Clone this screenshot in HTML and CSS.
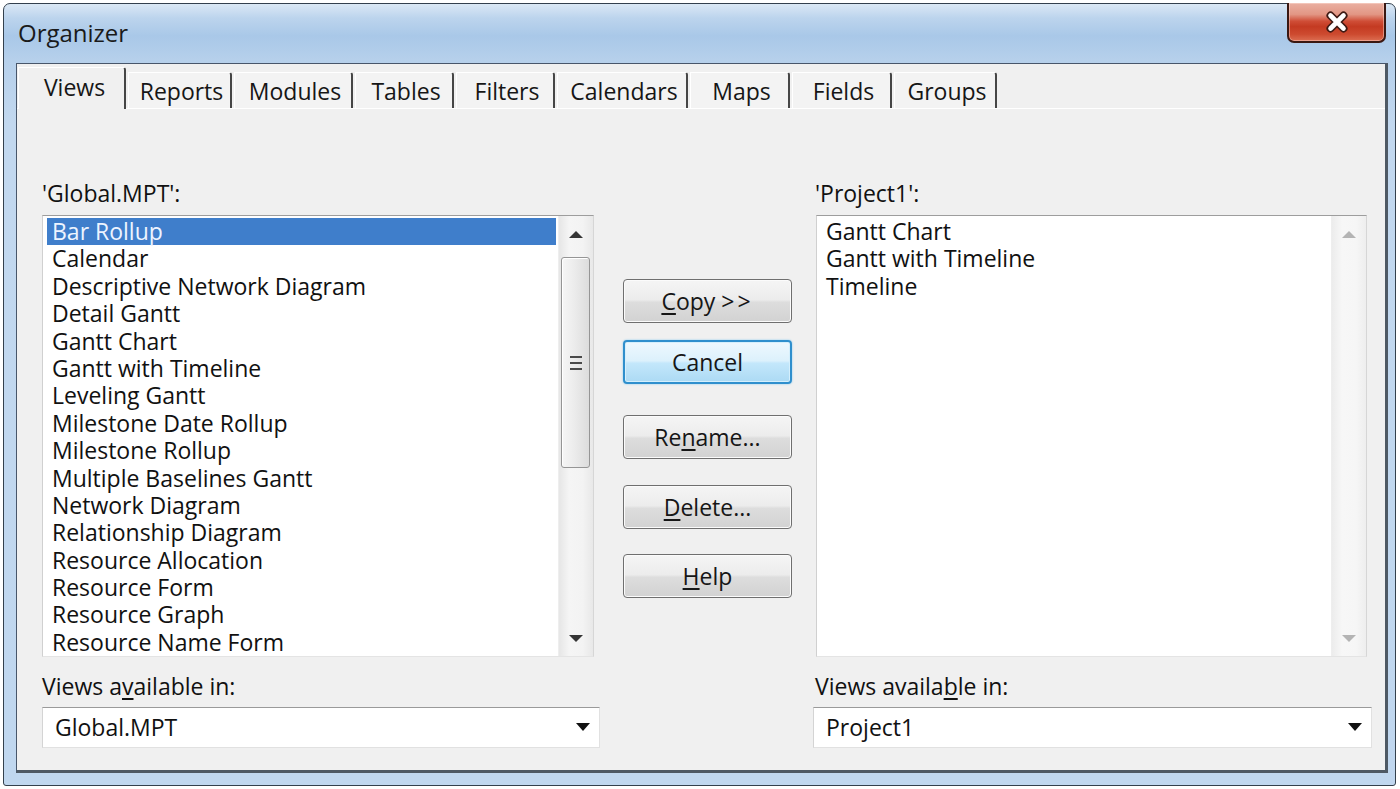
FILE: index.html
```html
<!DOCTYPE html>
<html lang="en">
<head>
<meta charset="utf-8">
<title>Organizer</title>
<link rel="stylesheet" href="styles.css">
</head>
<body>
<div class="window">
  <div class="titlebar">
    <div class="title">Organizer</div>
    <div class="close">
      <svg width="26" height="22" viewBox="0 0 26 22" aria-hidden="true">
        <path d="M6.5 4.5 L19.5 17.5 M19.5 4.5 L6.5 17.5" stroke="#3e1a14" stroke-width="8" stroke-linecap="round" fill="none"/>
        <path d="M6.5 4.5 L19.5 17.5 M19.5 4.5 L6.5 17.5" stroke="#ffffff" stroke-width="4.6" stroke-linecap="round" fill="none"/>
      </svg>
    </div>
  </div>
  <div class="client">
    <div class="tabs">
      <div class="tab sel t-views">Views</div>
      <div class="tab t-reports">Reports</div>
      <div class="tab t-modules">Modules</div>
      <div class="tab t-tables">Tables</div>
      <div class="tab t-filters">Filters</div>
      <div class="tab t-calendars">Calendars</div>
      <div class="tab t-maps">Maps</div>
      <div class="tab t-fields">Fields</div>
      <div class="tab t-groups">Groups</div>
    </div>
    <div class="page">
      <div class="col left">
        <div class="label top">'Global.MPT':</div>
        <div class="listbox">
          <div class="items">
            <div class="item selected">Bar Rollup</div>
            <div class="item">Calendar</div>
            <div class="item">Descriptive Network Diagram</div>
            <div class="item">Detail Gantt</div>
            <div class="item">Gantt Chart</div>
            <div class="item">Gantt with Timeline</div>
            <div class="item">Leveling Gantt</div>
            <div class="item">Milestone Date Rollup</div>
            <div class="item">Milestone Rollup</div>
            <div class="item">Multiple Baselines Gantt</div>
            <div class="item">Network Diagram</div>
            <div class="item">Relationship Diagram</div>
            <div class="item">Resource Allocation</div>
            <div class="item">Resource Form</div>
            <div class="item">Resource Graph</div>
            <div class="item">Resource Name Form</div>
          </div>
          <div class="vscroll">
            <div class="sarrow"><span class="tri-up"></span></div>
            <div class="track"><div class="thumb"><span class="grip"></span></div></div>
            <div class="sarrow"><span class="tri-down"></span></div>
          </div>
        </div>
        <div class="label lower">Views a<u>v</u>ailable in:</div>
        <div class="combo"><span>Global.MPT</span><span class="caret"></span></div>
      </div>
      <div class="buttons">
        <div class="btn b-copy"><span><u>C</u>opy <span class="gt">&gt;&gt;</span></span></div>
        <div class="btn default b-cancel">Cancel</div>
        <div class="btn b-rename"><span>Re<u>n</u>ame...</span></div>
        <div class="btn b-delete"><span><u>D</u>elete...</span></div>
        <div class="btn b-help"><span><u>H</u>elp</span></div>
      </div>
      <div class="col right">
        <div class="label top">'Project1':</div>
        <div class="listbox">
          <div class="items">
            <div class="item">Gantt Chart</div>
            <div class="item">Gantt with Timeline</div>
            <div class="item">Timeline</div>
          </div>
          <div class="vscroll disabled">
            <div class="sarrow"><span class="tri-up"></span></div>
            <div class="track"></div>
            <div class="sarrow"><span class="tri-down"></span></div>
          </div>
        </div>
        <div class="label lower">Views availa<u>b</u>le in:</div>
        <div class="combo"><span>Project1</span><span class="caret"></span></div>
      </div>
    </div>
  </div>
</div>
</body>
</html>
```
FILE: styles.css
```css
html, body {
  margin: 0;
  padding: 0;
  background: #ffffff;
}
body {
  font-family: "Open Sans", "Noto Sans", sans-serif;
  font-size: 23px;
  font-weight: 500;
  color: #111111;
}
u {
  text-decoration-thickness: 2px;
  text-underline-offset: 3px;
}

/* window frame */
.window {
  box-sizing: border-box;
  width: 1393px;
  height: 783px;
  margin: 3px 0 0 3px;
  border: 1px solid #33404d;
  border-radius: 7px 7px 3px 3px;
  background: linear-gradient(180deg, #dbe8f5 0px, #bcd4ed 14px, #a9c8e8 32px, #b6d0eb 56px, #c2d8ef 120px, #c0d7ef 100%);
  padding: 0 7px 12px 12px;
  display: flex;
  flex-direction: column;
}
.titlebar {
  height: 59px;
  flex: none;
  display: flex;
  justify-content: space-between;
  align-items: flex-start;
  padding-left: 2px;
}
.title {
  font-size: 24px;
  font-weight: 400;
  line-height: 28px;
  margin-top: 15px;
  color: #1a1a1a;
}
.close {
  box-sizing: border-box;
  width: 99px;
  height: 40px;
  margin-top: -1px;
  margin-right: 2px;
  border: 2px solid #3a1812;
  border-top: none;
  border-radius: 0 0 7px 7px;
  background: linear-gradient(180deg, #eab0a2 0%, #e29684 30%, #cf4d36 48%, #c43a22 62%, #cd4a2f 82%, #dc6e52 100%);
  box-shadow: inset 0 0 0 1px rgba(255, 225, 215, 0.45);
  display: flex;
  align-items: center;
  justify-content: center;
}

/* client area */
.client {
  box-sizing: border-box;
  height: 710px;
  flex: none;
  border: 1px solid #48566a;
  border-right: 3px solid #4e5964;
  border-bottom: 3px solid #4e5964;
  background: #f0f0f0;
  display: flex;
  flex-direction: column;
}
.tabs {
  box-sizing: border-box;
  height: 44px;
  flex: none;
  display: flex;
  align-items: flex-end;
  gap: 2px;
  padding: 3px 0 0 1px;
}
.tab {
  box-sizing: border-box;
  height: 36px;
  border-top: 1px solid #ffffff;
  border-left: 1px solid #ffffff;
  border-right: 2px solid #464646;
  border-top-right-radius: 3px;
  background: #f3f3f3;
  display: flex;
  align-items: center;
  justify-content: center;
  line-height: 1;
  padding: 1px 0 0 4px;
  color: #161616;
}
.tab.sel {
  height: 42px;
  margin-bottom: -1px;
  background: #f0f0f0;
  position: relative;
  z-index: 1;
  padding: 0 0 2px 6px;
}
.t-views { width: 108px; }
.t-reports { width: 104px; }
.t-modules { width: 119px; }
.t-tables { width: 99px; }
.t-filters { width: 99px; }
.t-calendars { width: 131px; }
.t-maps { width: 100px; }
.t-fields { width: 100px; }
.t-groups { width: 103px; }

.page {
  flex: 1;
  border-top: 1px solid #ffffff;
  display: flex;
  padding-left: 25px;
}
.col {
  display: flex;
  flex-direction: column;
}
.left { width: 558px; }
.right { width: 559px; }
.label {
  height: 28px;
  line-height: 28px;
  white-space: nowrap;
}
.label.top { margin-top: 70px; }
.right .label { padding-left: 2px; }
.label.lower { margin-top: 15px; }

/* list boxes */
.listbox {
  box-sizing: border-box;
  height: 442px;
  margin-top: 8px;
  border: 1px solid;
  border-color: #9d9d9d #d6d6d6 #e4e4e4 #d0d0d0;
  background: #ffffff;
  display: flex;
}
.left .listbox { width: 552px; }
.right .listbox { width: 551px; margin-left: 3px; }
.items {
  flex: 1;
  min-width: 0;
  padding: 2px 2px 0 4px;
}
.item {
  height: 27.4px;
  line-height: 27.4px;
  padding-left: 5px;
  white-space: nowrap;
}
.item.selected {
  background: #3f7ecb;
  color: #edf4ff;
}
.vscroll {
  width: 34px;
  flex: none;
  display: flex;
  flex-direction: column;
  border-left: 1px solid #eeeeee;
  background: linear-gradient(90deg, #e6e6e6 0%, #f5f5f5 30%, #f3f3f3 70%, #e8e8e8 100%);
}
.sarrow {
  height: 36px;
  flex: none;
  display: flex;
  align-items: center;
  justify-content: center;
}
.tri-up {
  width: 0;
  height: 0;
  border-left: 7px solid transparent;
  border-right: 7px solid transparent;
  border-bottom: 7px solid #353535;
}
.tri-down {
  width: 0;
  height: 0;
  border-left: 7px solid transparent;
  border-right: 7px solid transparent;
  border-top: 7px solid #353535;
}
.disabled .tri-up { border-bottom-color: #b4b4b4; }
.disabled .tri-down { border-top-color: #b4b4b4; }
.disabled { background: linear-gradient(90deg, #ececec 0%, #f7f7f7 30%, #f6f6f6 70%, #eeeeee 100%); }
.track { flex: 1; }
.thumb {
  box-sizing: border-box;
  height: 211px;
  margin: 5px 3px 0 2px;
  border: 1px solid #959595;
  border-radius: 3px;
  background: linear-gradient(90deg, #f6f6f6 0%, #ececec 45%, #dcdcdc 100%);
  box-shadow: inset 1px 1px 0 #ffffff;
  display: flex;
  align-items: center;
  justify-content: center;
}
.grip {
  width: 12px;
  height: 14px;
  background: repeating-linear-gradient(180deg, #4a4a4a 0 2px, transparent 2px 6px);
}

/* combo boxes */
.combo {
  box-sizing: border-box;
  height: 41px;
  margin-top: 7px;
  border: 1px solid #e1e1e1;
  border-top-color: #9a9a9a;
  border-left-color: #d4d4d4;
  background: #ffffff;
  display: flex;
  align-items: center;
  justify-content: space-between;
  padding: 0 9px 1px 12px;
}
.left .combo { width: 558px; }
.right .combo { width: 559px; }
.caret {
  width: 0;
  height: 0;
  border-left: 7px solid transparent;
  border-right: 7px solid transparent;
  border-top: 8px solid #111111;
}

/* buttons */
.buttons {
  box-sizing: border-box;
  width: 213px;
  padding-left: 23px;
  display: flex;
  flex-direction: column;
}
.btn {
  box-sizing: border-box;
  width: 169px;
  height: 44px;
  flex: none;
  border: 1px solid #6f6f6f;
  border-radius: 4px;
  background: linear-gradient(180deg, #f5f5f5 0%, #ececec 47%, #dddddd 53%, #d2d2d2 100%);
  box-shadow: inset 0 0 0 1px #fbfbfb;
  display: flex;
  align-items: center;
  justify-content: center;
  white-space: nowrap;
  color: #161616;
}
.btn.default {
  border: 2px solid #2f8fcd;
  background: linear-gradient(180deg, #eef8fe 0%, #dcf1fc 47%, #c3e7fb 53%, #acdaf4 100%);
  box-shadow: inset 0 0 0 1px #d5effc, 0 0 2px #7cc4ee;
}
.gt { letter-spacing: 3px; }
.b-copy { margin-top: 170px; }
.b-cancel { margin-top: 17px; }
.b-rename { margin-top: 31px; }
.b-delete { margin-top: 26px; }
.b-help { margin-top: 25px; }
```
